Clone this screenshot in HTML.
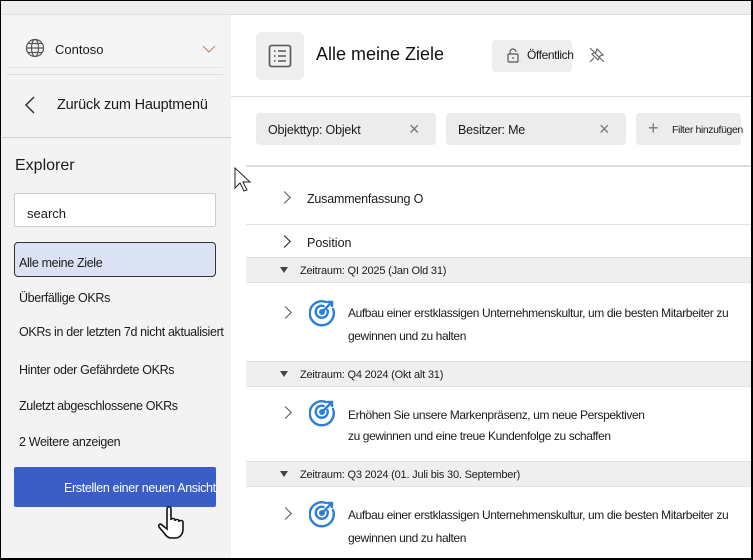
<!DOCTYPE html>
<html><head><meta charset="utf-8"><style>
*{box-sizing:border-box;margin:0;padding:0}
body{width:753px;height:560px;overflow:hidden;background:#fff;font-family:"Liberation Sans",sans-serif;color:#1b1b1b;position:relative}
.a{position:absolute;white-space:nowrap}
.frame{position:absolute;left:0;top:0;width:753px;height:560px;border:1px solid #000;border-right-width:2px;border-bottom-width:2px;pointer-events:none}
.side{position:absolute;left:1px;top:15px;width:230px;height:545px;background:#f3f3f3}
.t13{font-size:13px}
.si{font-size:12.5px;letter-spacing:-0.35px}
.chip{position:absolute;top:113px;height:32px;background:#ececec;border-radius:4px;font-size:12.5px;letter-spacing:-0.2px}
.grp{position:absolute;left:246px;width:505px;height:26px;background:#efefef;border-top:1px solid #e0e0e0;border-bottom:1px solid #e0e3ea;font-size:11px;letter-spacing:-0.2px}
.tri{position:absolute;left:34px;top:9px;width:0;height:0;border-left:4px solid transparent;border-right:4px solid transparent;border-top:6px solid #444}
.chev{position:absolute;width:9px;height:9px;border-right:1.5px solid #555;border-top:1.5px solid #555;transform:rotate(45deg)}
.gt{font-size:12px;letter-spacing:-0.4px}
</style></head><body>
<div class="a" style="left:0;top:0;width:753px;height:15px;background:#efefef;border-bottom:1px solid #e0e0e0"></div>
<div class="side"></div>
<div class="a" style="left:7px;top:22px;width:216px;height:46px;background:#f5f5f5;border-bottom:1px solid #e6e6e6"></div>
<div class="a" style="left:7px;top:74px;width:216px;height:1px;background:#ddd"></div>
<svg class="a" style="left:25px;top:38px" width="20" height="20" viewBox="0 0 20 20" fill="none" stroke="#555" stroke-width="1.2"><circle cx="10" cy="10" r="8.5"/><ellipse cx="10" cy="10" rx="3.5" ry="8.5"/><path d="M1.5 10h17M3 5.5h14M3 14.5h14"/></svg>
<div class="a t13" style="left:55px;top:42px">Contoso</div>
<svg class="a" style="left:202px;top:45px" width="14" height="8"><path d="M1 1l6 6 6-6" fill="none" stroke="#c08a6a" stroke-width="1.2"/></svg>
<svg class="a" style="left:24px;top:96px" width="12" height="18"><path d="M10 1L2 9l8 8" fill="none" stroke="#333" stroke-width="1.5"/></svg>
<div class="a" style="left:57px;top:97px;font-size:14.5px;letter-spacing:-0.2px">Zurück zum Hauptmenü</div>
<div class="a" style="left:1px;top:137px;width:230px;height:1px;background:#d0d0d0"></div>
<div class="a" style="left:15px;top:157px;font-size:16px">Explorer</div>
<div class="a" style="left:14px;top:193px;width:202px;height:34px;background:#fff;border:1px solid #ccc;border-radius:2px"></div>
<div class="a t13" style="left:27px;top:206px">search</div>
<div class="a" style="left:14px;top:242px;width:202px;height:35px;background:#dae2f3;border:1px solid #333;border-radius:4px"></div>
<div class="a si" style="left:19px;top:256px">Alle meine Ziele</div>
<div class="a si" style="left:19px;top:291px">Überfällige OKRs</div>
<div class="a si" style="left:19px;top:325px">OKRs in der letzten 7d nicht aktualisiert</div>
<div class="a si" style="left:19px;top:363px">Hinter oder Gefährdete OKRs</div>
<div class="a si" style="left:19px;top:399px">Zuletzt abgeschlossene OKRs</div>
<div class="a si" style="left:19px;top:435px">2 Weitere anzeigen</div>
<div class="a" style="left:14px;top:467px;width:202px;height:40px;background:#3a5ec6;border-radius:2px"></div>
<div class="a si" style="left:64px;top:481px;color:#fff">Erstellen einer neuen Ansicht</div>
<svg class="a" style="left:155px;top:505px" width="34" height="36" viewBox="0 0 34 36"><path d="M12 4c0-3 4-3 4 0v11c0-2 4-2 4 0v1c0-2 4-2 4 0v1c0-2 4-2 4 0v7c0 5-3 9-8 9h-4c-3 0-5-2-7-5L4 22c-1-2 1-4 3-2l5 4z" fill="#fff" stroke="#111" stroke-width="1.6"/></svg>
<!-- header -->
<div class="a" style="left:256px;top:32px;width:48px;height:48px;background:#efefef;border-radius:6px"></div>
<svg class="a" style="left:268px;top:44px" width="24" height="24" viewBox="0 0 24 24" fill="none" stroke="#555" stroke-width="1.6"><rect x="1.5" y="1.5" width="21" height="21" rx="2"/><path d="M6 7h1.5M6 12h1.5M6 17h1.5M10 7h8M10 12h8M10 17h8"/></svg>
<div class="a" style="left:316px;top:44px;font-size:18px;color:#111">Alle meine Ziele</div>
<div class="a" style="left:492px;top:40px;width:80px;height:32px;background:#eee;border-radius:4px"></div>
<svg class="a" style="left:507px;top:48px" width="12" height="15" viewBox="0 0 12 15" fill="none" stroke="#555" stroke-width="1.2"><rect x="1" y="6" width="10" height="8" rx="1"/><path d="M3 6V4a3 3 0 0 1 6 0"/><path d="M6 9v2"/></svg>
<div class="a" style="left:527px;top:48px;font-size:12px;letter-spacing:-0.4px">Öffentlich</div>
<svg class="a" style="left:588px;top:46px" width="18" height="18" viewBox="0 0 18 18" fill="none" stroke="#666" stroke-width="1.2"><path d="M2 2l14 14M9 3l6 6-3 1-2 4-6-6 4-2zM6 12l-4 4"/></svg>
<div class="a" style="left:231px;top:96px;width:522px;height:1px;background:#ddd"></div>
<div class="chip" style="left:256px;width:180px"><span class="a" style="left:12px;top:10px">Objekttyp: Objekt</span><span class="a" style="left:153px;top:6px;font-size:18px;color:#777">×</span></div>
<div class="chip" style="left:446px;width:180px"><span class="a" style="left:12px;top:10px">Besitzer: Me</span><span class="a" style="left:153px;top:6px;font-size:18px;color:#777">×</span></div>
<div class="chip" style="left:636px;width:105px"><span class="a" style="left:12px;top:5px;font-size:18px;color:#777">+</span><span class="a" style="left:36px;top:11px;font-size:10.5px;letter-spacing:-0.4px">Filter hinzufügen</span></div>
<div class="a" style="left:246px;top:165px;width:507px;height:2px;background:#ddd"></div>
<svg class="a" style="left:234px;top:167px" width="18" height="26" viewBox="0 0 18 26"><path d="M1 1v20l5-5 4 8 3-1-4-8h7z" fill="#fff" stroke="#222" stroke-width="1"/></svg>
<div class="chev" style="left:280px;top:193px"></div>
<div class="a" style="left:307px;top:192px;font-size:12.5px;letter-spacing:-0.2px">Zusammenfassung O</div>
<div class="a" style="left:246px;top:224px;width:505px;height:1px;background:#dde2ec"></div>
<div class="chev" style="left:280px;top:237px;border-color:#222"></div>
<div class="a" style="left:307px;top:236px;font-size:12.5px">Position</div>
<div class="grp" style="top:257px"><div class="tri"></div><span class="a" style="left:54px;top:7px">Zeitraum: QI 2025 (Jan Old 31)</span></div>
<div class="grp" style="top:361px"><div class="tri"></div><span class="a" style="left:54px;top:7px">Zeitraum: Q4 2024 (Okt alt 31)</span></div>
<div class="grp" style="top:461px"><div class="tri"></div><span class="a" style="left:54px;top:7px">Zeitraum: Q3 2024 (01. Juli bis 30. September)</span></div>
<!-- goals -->
<div class="chev" style="left:281px;top:308px"></div>
<div class="chev" style="left:281px;top:408px"></div>
<div class="chev" style="left:281px;top:509px"></div>
<svg width="0" height="0" style="position:absolute"><defs><g id="tg" fill="none" stroke="#2b7fd8" stroke-width="2.4" stroke-linecap="round"><path d="M24 11a12 12 0 1 1-7-7"/><path d="M18.5 12a6 6 0 1 1-4-4"/><circle cx="13" cy="14" r="1.8" fill="#2b7fd8"/><path d="M13 14l10-10M19 4h4v4"/></g></defs></svg>
<svg class="a" style="left:309px;top:298px" width="30" height="30" viewBox="0 0 30 30"><use href="#tg"/></svg>
<svg class="a" style="left:309px;top:398px" width="30" height="30" viewBox="0 0 30 30"><use href="#tg"/></svg>
<svg class="a" style="left:309px;top:499px" width="30" height="30" viewBox="0 0 30 30"><use href="#tg"/></svg>
<div class="a gt" style="left:348px;top:302px;line-height:23px">Aufbau einer erstklassigen Unternehmenskultur, um die besten Mitarbeiter zu<br>gewinnen und zu halten</div>
<div class="a gt" style="left:348px;top:405px;line-height:21px">Erhöhen Sie unsere Markenpräsenz, um neue Perspektiven<br>zu gewinnen und eine treue Kundenfolge zu schaffen</div>
<div class="a gt" style="left:348px;top:504px;line-height:23px">Aufbau einer erstklassigen Unternehmenskultur, um die besten Mitarbeiter zu<br>gewinnen und zu halten</div>
<div class="frame"></div>
</body></html>
